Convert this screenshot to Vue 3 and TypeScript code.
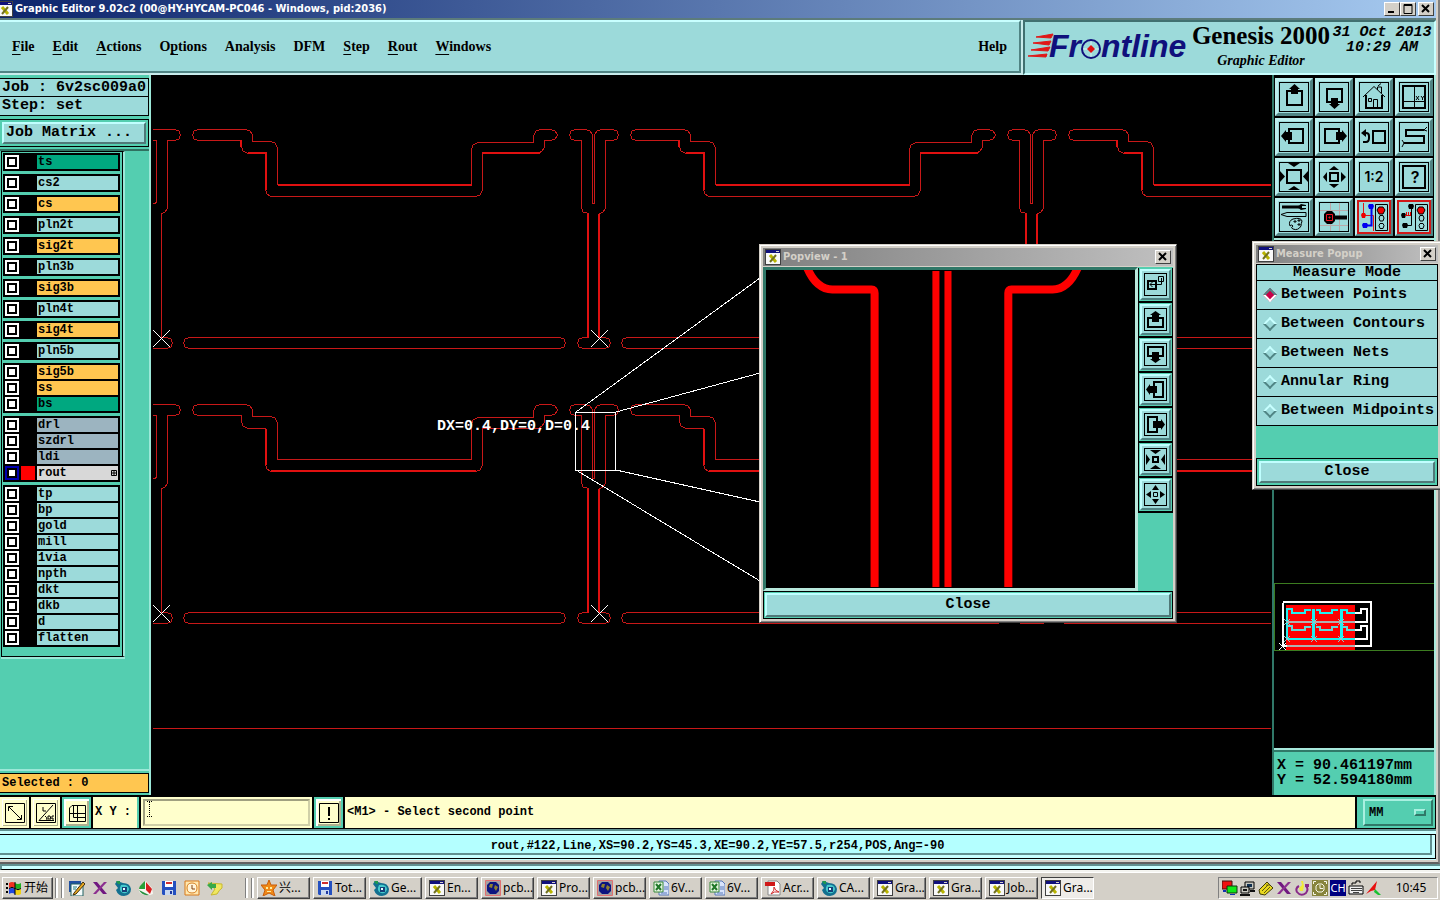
<script setup lang="ts">
import { h, ref } from 'vue'

interface Part {
  d?: string
  w?: number
  c?: string
  f?: string
  t?: string
  x?: number
  y?: number
  s?: number
}

const icons: Record<string, Part[]> = {
  panUp: [{ d: 'M8 9H23V23H8Z', w: 2 }, { d: 'M15.500 2L21 7H19V12H12V7H10Z', f: '#000' }],
  panDown: [{ d: 'M8 7H23V20H8Z', w: 2 }, { d: 'M12 16H19V22H21L15.500 27L10 22H12Z', f: '#000' }],
  home: [
    { d: 'M4 15L15 4.500L26 15M18.500 8V5H22.500V11M19 4l3-2.500', w: 1 },
    { d: 'M7 13V26H23V13', w: 2 },
    { d: 'M14.500 26V17.500H18.500V26M9.500 16.500h3v3h-3z', w: 1 },
  ],
  gridXy: [
    { d: 'M4 4H26V26H4Z', w: 2 },
    { d: 'M15.500 4V26M4 19.500H26', w: 1 },
    { d: 'M17 14l3 4M20 14l-3 4M22 14l1.500 2L25 14M23.500 16v2', w: 1 },
  ],
  panLeft: [{ d: 'M10 7H24V21H10Z', w: 2 }, { d: 'M2 14L7 8V10H13V18H7V20Z', f: '#000' }],
  panRight: [{ d: 'M6 7H20V21H6Z', w: 2 }, { d: 'M28 14L23 8V10H17V18H23V20Z', f: '#000' }],
  previous: [
    { d: 'M14 9H26V21H14Z', w: 2 },
    { d: 'M4 20H7Q10 20 10 16V14Q10 11 7 11H5', w: 2 },
    { d: 'M2 11L7 7V15Z', f: '#000' },
  ],
  snake: [
    { d: 'M25 8H7V14H25V21H5', w: 2 },
    { d: 'M25 8l3-3M25 8l3 1M5 21l-2-3M5 21l-2 4', w: 1 },
  ],
  fit: [
    { d: 'M8 8H22V21H8Z', w: 2 },
    { d: 'M9 1H21L15 5ZM9 28H21L15 24ZM1 9V20L6 14.500ZM29 9V20L24 14.500Z', f: '#000' },
  ],
  expand: [
    { d: 'M11 11H19V19H11Z', w: 2 },
    { d: 'M10 8H20L15 4ZM10 22H20L15 26ZM8 10V20L4 15ZM22 10V20L27 15Z', f: '#000' },
  ],
  ratio: [{ t: '1:2', x: 15, y: 20, s: 14 }],
  help: [{ d: 'M4 4H26V26H4Z', w: 2 }, { t: '?', x: 16, y: 21, s: 16 }],
  tools: [
    { d: 'M3 5H20', w: 3 },
    { d: 'M27 3L22 2L18 5L22 8L27 7V6H23V4H27Z', f: '#000' },
    { d: 'M2 12.500L8 10.500H27V14.500H8Z', w: 1 },
    { d: 'M11 24Q9 19 14 17Q22 15 23 19Q22 22 22 24Q19 29 14 27Q11 26 14 24Q13 22 11 24Z', w: 1 },
    { d: 'M15 19h2v1h-2zM19 18h2v1h-2zM19 22h2v1h-2z', w: 1 },
  ],
  probe: [
    { d: 'M11.500 1V29M20.500 1V29M1 8.500H29M1 23.500H29', w: 1, c: '#b9a9a9' },
    { d: 'M16 15.500H28', w: 4 },
    { d: 'M8 9H13L16 12V19L13 22H8L5 19V12Z', f: '#000' },
    { d: 'M7.500 12.500h6v6h-6zM10 15h1v1h-1z', w: 1, c: '#f01020' },
  ],
  netHighlight: [
    { d: 'M4.500 1V13.500M4 13.500H14.500V29', w: 1, c: '#e01818' },
    { d: 'M12.500 4V23.500H6', w: 2, c: '#0000f0' },
    { d: 'M10 2h4l1 2-1 3h-4l-1-3zM4 21h4l1 2-1 3H4l-1-3z', f: '#0000f0' },
    { d: 'M3 11h3l1 2-1 3H3l-1-3z', f: '#f00000' },
    { d: 'M16.500 2.500H28.500V28.500H16.500Z', w: 1 },
    { d: 'M20 5h4l2 3-2 4h-4l-2-4z', f: '#f00000', c: '#000', w: 1 },
    { d: 'M21 13.500h3l1 2.500-1 3h-3l-1-3zM21 21.500h3l1 2-1 3h-3l-1-3z', w: 1 },
  ],
  netBroken: [
    { d: 'M12.500 4V23.500H6', w: 1 },
    { d: 'M10 2h4l1 2-1 3h-4l-1-3zM4 21h4l1 2-1 3H4l-1-3zM3 11h3l1 2-1 3H3l-1-3z', f: '#000' },
    { d: 'M6 13.500H12M7.500 10V14M9.500 10V14M11.500 10V14', w: 1, c: '#e00000' },
    { d: 'M16.500 2.500H28.500V28.500H16.500Z', w: 1 },
    { d: 'M20 5h4l2 3-2 4h-4l-2-4z', f: '#f00000', c: '#000', w: 1 },
    { d: 'M21 13.500h3l1 2.500-1 3h-3l-1-3zM21 21.500h3l1 2-1 3h-3l-1-3z', w: 1 },
  ],
  popLink: [
    { d: 'M3 7H11V15H3Z', w: 2 },
    { d: 'M13.500 2.500H18.500V7.500H13.500ZM16.500 4V10.500H5M7.500 8L5 10.500L7.500 13', w: 1 },
  ],
  popUp: [{ d: 'M7 9H3V18H18V9H14', w: 2 }, { d: 'M10.500 2L16 6H14V13H7V6H5Z', f: '#000' }],
  popDown: [{ d: 'M7 12H3V3H18V12H14', w: 2 }, { d: 'M10.500 19L16 15H14V8H7V15H5Z', f: '#000' }],
  popLeft: [{ d: 'M9 7V3H18V18H9V14', w: 2 }, { d: 'M1 10.500L5 5V7H12V14H5V16Z', f: '#000' }],
  popRight: [{ d: 'M12 7V3H3V18H12V14', w: 2 }, { d: 'M20 10.500L16 5V7H8V14H16V16Z', f: '#000' }],
  popIn: [
    { d: 'M8 8H13V13H8Z', w: 2 },
    { d: 'M5 1H16L10.500 5ZM5 20H16L10.500 16ZM1 5V16L5 10.500ZM20 5V16L16 10.500Z', f: '#000' },
  ],
  popOut: [
    { d: 'M8.500 8.500H12.500V12.500H8.500Z', w: 1 },
    { d: 'M7 6H14L10.500 1ZM7 15H14L10.500 20ZM6 7V14L1 10.500ZM15 7V14L20 10.500Z', f: '#000' },
  ],
  diagonal: [{ d: 'M.500.500H19.500V19.500H.500Z', w: 1 }, { d: 'M4 4L16 16M3.500 8V3.500H8M16.500 12V16.500H12', w: 1 }],
  angle: [{ d: 'M.500.500H19.500V19.500H.500Z', w: 1 }, { d: 'M17 2L3 17.500H18M7 4V8H10M9 13Q11 14 11 17M14 13h-2v3h3zM18 13h-2v3h2', w: 1 }],
  snapGrid: [{ d: 'M5 2.500H18.500V18.500H2.500V5Z', w: 1 }, { d: 'M10.500 3V18M3 10.500H18M6.500 3V14.500H18', w: 1 }],
  alert: [{ d: 'M.500.500H19.500V19.500H.500Z', w: 1 }, { d: 'M10 4V13M10 15V17', w: 2 }],
  xwin: [
    { d: 'M0 0H16V16H0Z', f: '#404040' },
    { d: 'M1 1H15V15H1Z', f: '#f8f8f8' },
    { d: 'M1 1H15V4H1Z', f: '#10107c' },
    { d: 'M11 2h3v1h-3z', f: '#d4d0c8' },
    { d: 'M5 6L11 13', w: 3, c: '#b8b400' },
    { d: 'M11 6L5 13', w: 2, c: '#707020' },
  ],
  notepad: [
    { d: 'M0 1H12V12H0Z', f: '#2050a0' },
    { d: 'M2 4H14V16H2Z', f: '#f4fbfb', c: '#206060', w: 1 },
    { d: 'M5 13L14 2L16 4L7 14L4 15Z', f: '#e8a820', c: '#403010', w: 1 },
    { d: 'M4 7h4M4 9h3', w: 1, c: '#208080' },
  ],
  purpleX: [
    { d: 'M1 2H5L15 14H11Z', f: '#701880' },
    { d: 'M12 2H15L4 14H1Z', f: '#8c3090' },
  ],
  orb: [
    { d: 'M2 1L8 3Q15 3 16 9Q16 15 9 16Q3 16 1 10L3 8L0 4Z', f: '#127090' },
    { d: 'M6 5Q13 4 14 9Q13 14 8 13Q3 11 6 5Z', f: '#46c9cc' },
    { d: 'M7 7h5v5H7z', f: '#164078' },
    { d: 'M8 8h2v2H8z', f: '#e8ffff' },
    { d: 'M1 1H5V4H3Z', f: '#209850' },
  ],
  sail: [
    { d: 'M8 1L14 8L15 14Q8 17 2 13Q0 10 2 8Z', f: '#f6f6f0' },
    { d: 'M7 1Q1 6 1 9H7Z', f: '#28a038' },
    { d: 'M8 2L14 9L12 14L8 10Z', f: '#d82020' },
    { d: 'M1 10Q4 16 11 15L7 13Z', f: '#289040' },
  ],
  floppy: [
    { d: 'M1 1H15V15H2L1 14Z', f: '#2450c0' },
    { d: 'M4 1H12V7H4Z', f: '#fff' },
    { d: 'M5 2H11V4H5Z', f: '#d03030' },
    { d: 'M4 10H12V15H4Z', f: '#c8d8f0' },
    { d: 'M9 11h2v3H9z', f: '#2038a0' },
  ],
  clockBox: [
    { d: 'M1 1H15V15H1Z', f: '#ffe8b0', c: '#d87818', w: 1 },
    { d: 'M8 3Q13 3 13 8Q13 13 8 13Q3 13 3 8Q3 3 8 3Z', f: '#fff4d8', c: '#d88020', w: 1 },
    { d: 'M8 5V9H11', w: 1, c: '#804010' },
  ],
  note: [
    { d: 'M1 3L15 4L15 8Q12 10 10 14L4 15L8 9Z', f: '#f0e860', c: '#c8b830', w: 1 },
    { d: 'M0 5L5 2V4H9V8H5V10Z', f: '#38a848' },
  ],
  star: [
    { d: 'M8 0L10 5L16 5L12 10L14 16L8 13L2 16L4 10L0 5L6 5Z', f: '#f08a18', c: '#c85c08', w: 1 },
    { d: 'M5 7h2v2H5zM9 7h2v2H9zM6 11h4v1H6z', f: '#fff0a0' },
  ],
  globe: [
    { d: 'M.500.500H15.500V15.500H.500Z', f: '#a8a0a0', c: '#e07070', w: 1 },
    { d: 'M5 2H11L14 5V11L11 14H5L2 11V5Z', f: '#0c1480' },
    { d: 'M5 4H8L7 8L4 7ZM10 5L13 7L11 11L9 8Z', f: '#908030' },
  ],
  excel: [
    { d: 'M6 1H13L16 4V15H6Z', f: '#d8e4fc', c: '#5878b8', w: 1 },
    { d: 'M1 2H10V12H1Z', f: '#e6f6e0', c: '#388838', w: 1 },
    { d: 'M3 4L8 10M8 4L3 10', w: 2, c: '#207828' },
    { d: 'M11 7H15M11 9H15M8 13H14', w: 1, c: '#5878b8' },
  ],
  pdf: [
    { d: 'M3 1H12L15 4V15H3Z', f: '#fff', c: '#888', w: 1 },
    { d: 'M0 2H10V6H0Z', f: '#d01818' },
    { d: 'M6 14Q10 10 9 7Q10 11 14 12Q9 11 6 14Z', w: 1, c: '#d02828' },
  ],
  monitors: [
    { d: 'M0 1H10V9H0Z', f: '#f01010', c: '#401010', w: 1 },
    { d: 'M5 6H15V13H5Z', f: '#10e818', c: '#103010', w: 1 },
    { d: 'M8 14H13V15H8ZM1 10H4V12H1Z', f: '#1030b0' },
  ],
  network: [
    { d: 'M5 2H14V9H5Z', f: '#c8c8c0', c: '#000', w: 1 },
    { d: 'M7 4H12V7H7Z', f: '#103050' },
    { d: 'M1 7H9V13H1Z', f: '#c8c8c0', c: '#000', w: 1 },
    { d: 'M3 9H7V11H3ZM0 14H10V16H0ZM10 10H15V12H10Z', f: '#101010' },
  ],
  tag: [
    { d: 'M1 10L9 2L15 8L7 15L2 14Z', f: '#e8d820', c: '#403c08', w: 1 },
    { d: 'M4 11L10 5M6 13L12 7M8 5h4', w: 1, c: '#605810' },
  ],
  ring: [
    { d: 'M5 6Q1 8 3 12Q7 17 12 13Q15 9 12 6', w: 2, c: '#882888' },
    { d: 'M11 4h4v3h-4z', f: '#882888' },
    { d: 'M7 1H9L10 6L9 11H6L5 8L8 5Z', f: '#f0e838' },
  ],
  clockOlive: [
    { d: 'M0 0H16V16H0Z', f: '#88843c' },
    { d: 'M6 4H10L12 6V10L10 12H6L4 10V6Z', w: 1, c: '#f8f8e8' },
    { d: 'M8 5V8.500H11M1.500 4V1.500H4M12 1.500H14.500V4M1.500 12V14.500H4M12 14.500H14.500V12', w: 1, c: '#f8f8e8' },
  ],
  keyboard: [
    { d: 'M1 6H15V14H1Z', f: '#f0f0f0', c: '#000', w: 1 },
    { d: 'M3 8.500H14M3 10.500H14M5 12.500H11', w: 1, c: '#404040' },
    { d: 'M4 5V3H8V1H12V3', w: 1 },
  ],
  wing: [
    { d: 'M0 14L11 1L9 10L5 11Z', f: '#e81010' },
    { d: 'M9 9L15 15H12L8 12Z', f: '#18c030' },
  ],
  flag: [
    { d: 'M0 3h2v2H0zM0 7h2v2H0zM0 11h2v2H0z', f: '#000' },
    { d: 'M3 3Q6 1 9 3V8Q6 6 3 8Z', f: '#f03020' },
    { d: 'M9 3Q12 5 15 3V8Q12 10 9 8Z', f: '#20b020' },
    { d: 'M3 9Q6 7 9 9V14Q6 12 3 14Z', f: '#2048e0' },
    { d: 'M9 9Q12 11 15 9V14Q12 16 9 14Z', f: '#f0d010' },
    { d: 'M9 2V15M3 8.500Q6 6 9 8.500T15 8.500', w: 1 },
  ],
}

const Icon = (p: { name: string; size: number }) =>
  h(
    'svg',
    { width: p.size, height: p.size, viewBox: `0 0 ${p.size} ${p.size}`, 'aria-hidden': 'true' },
    icons[p.name].map((q) =>
      q.t
        ? h('text', { x: q.x, y: q.y, 'font-size': q.s, 'text-anchor': 'middle', 'font-weight': 600, 'font-family': 'Inter, "Noto Sans", sans-serif' }, q.t)
        : h('path', { d: q.d, fill: q.f ?? 'none', stroke: q.c ?? (q.w ? '#000' : 'none'), 'stroke-width': q.w ?? 0 }),
    ),
  )
Icon.props = ['name', 'size']

const menus = [
  ['', 'F', 'ile'], ['', 'E', 'dit'], ['', 'A', 'ctions'], ['O', 'p', 'tions'], ['Analysis', '', ''],
  ['DFM', '', ''], ['', 'S', 'tep'], ['', 'R', 'out'], ['', 'W', 'indows'],
]

interface Layer { name: string; kind: string }
const L = (kind: string, ...names: string[]): Layer[] => names.map((name) => ({ name, kind }))
const layerGroups: Layer[][] = [
  L('mask', 'ts'), L('plane', 'cs2'), L('signal', 'cs'), L('plane', 'pln2t'), L('signal', 'sig2t'),
  L('plane', 'pln3b'), L('signal', 'sig3b'), L('plane', 'pln4t'), L('signal', 'sig4t'), L('plane', 'pln5b'),
  [...L('signal', 'sig5b', 'ss'), ...L('mask', 'bs')],
  [...L('drill', 'drl', 'szdrl', 'ldi'), ...L('active', 'rout')],
  L('plane', 'tp', 'bp', 'gold', 'mill', '1via', 'npth', 'dkt', 'dkb', 'd', 'flatten'),
]

const tools = [
  'panUp', 'panDown', 'home', 'gridXy', 'panLeft', 'panRight', 'previous', 'snake',
  'fit', 'expand', 'ratio', 'help', 'tools', 'probe', 'netHighlight', 'netBroken',
]
const popTools = ['popLink', 'popUp', 'popDown', 'popLeft', 'popRight', 'popIn', 'popOut']

const modes = ['Between Points', 'Between Contours', 'Between Nets', 'Annular Ring', 'Between Midpoints']
const mode = ref(modes[0])
const xy = ref('')
const unit = ref('MM')

const slotPath =
  'M198 129.500H246L250 131L252.500 135V141.500H271L275 143L277.500 148V184.500H471.500V149L473 145L478 142.500H533.500V136L536 131L540 129.500H551L555 131L557.500 135L555 139L551 140.500H544.500V147L542 151L538 153.500H482.500V190L480 195L476 196.500H271L267 194L265.500 190V153.500H248L243 151L241.500 146V140.500H198L194 139L192.500 135L194 131Z'
const tabPath =
  'M575 129.500H585L590 131L592.500 135V203.500H594.500V135L597 131L602 129.500H613L617 131L618.500 135L617 139L613 140.500H605.500V208L603 212L599.500 213.500V337.500H605L609 339L610.500 343L609 347L605 348.500H583L579 347L577.500 343L579 339L583 337.500H588.500V213.500L583 212L581.500 208V140.500H575L571 139L569.500 135L571 131Z'
const edgeTabPath =
  'M580 129.500H613L617 131L618.500 135L617 139L613 140.500H605.500V208L603 212L599.500 213.500V337.500H605L609 339L610.500 343L609 347L605 348.500H580M580 140.500H594.500V202L593 203.500H580'
const barPath =
  'M189 337.500H560L564 339L565.500 343L564 347L560 348.500H189L185 347L183.500 343L185 339Z'
const cells = [0, 1].flatMap((row) => [-1, 0, 1, 2].map((col) => ({ row, key: `${row}:${col}`, edge: col < 0, x: col * 438, y: row * 275 })))
const thick = ['M278 185H472M482 153H540M248 153H266V190M241 140V147M588 214V338M599 214V338', 'M271 196H476M266 154V190M588 214V338M599 214V338']

const quick = ['notepad', 'purpleX', 'orb', 'sail', 'floppy', 'clockBox', 'note']
const tasks: [string, string][] = [
  ['star', '兴...'], ['floppy', 'Tot...'], ['orb', 'Ge...'], ['xwin', 'En...'], ['globe', 'pcb...'],
  ['xwin', 'Pro...'], ['globe', 'pcb...'], ['excel', '6V...'], ['excel', '6V...'], ['pdf', 'Acr...'],
  ['orb', 'CA...'], ['xwin', 'Gra...'], ['xwin', 'Gra...'], ['xwin', 'Job...'], ['xwin', 'Gra...'],
]
const tray = ['monitors', 'network', 'tag', 'purpleX', 'ring', 'clockOlive', 'CH', 'keyboard', 'wing']
</script>

<template>
  <div class="desktop">
    <div class="window">
      <header class="title">
        <Icon name="xwin" :size="16" class="ticon" />
        <h1>Graphic Editor 9.02c2 (00@HY-HYCAM-PC046 - Windows, pid:2036)</h1>
        <div class="winbtns">
          <button type="button" aria-label="Minimize"><svg width="12" height="10"><path d="M2 8H8" stroke="#000" stroke-width="2" /></svg></button>
          <button type="button" aria-label="Maximize"><svg width="12" height="10"><path d="M2 .5H10V9.500H2ZM2 1.500H10" fill="none" stroke="#000" /></svg></button>
          <button type="button" class="x" aria-label="Close window"><svg width="12" height="10"><path d="M2 1L9 8M9 1L2 8" stroke="#000" stroke-width="2" /></svg></button>
        </div>
      </header>

      <div class="head">
        <nav class="menubar">
          <button v-for="m in menus" :key="m.join('')" type="button">{{ m[0] }}<u v-if="m[1]">{{ m[1] }}</u>{{ m[2] }}</button>
          <button type="button" class="help">Help</button>
        </nav>
        <div class="brand">
          <svg class="logo" width="164" height="40" viewBox="0 0 164 40" role="img" aria-label="Frontline">
            <path d="M8 8L25 5L23 9ZM5 14L23 12L21 16ZM3 21L22 18L20 22ZM0 27L19 25L18 28Z" fill="#e01818" stroke="#e01818" />
            <g class="word">
              <text x="21" y="28">Fr</text>
              <text x="73" y="28">ntline</text>
            </g>
            <circle cx="63" cy="20" r="9" fill="#9cdada" />
            <path d="M63 10V30M53 20H73" stroke="#d8f4f4" />
            <circle cx="63" cy="20" r="9" fill="none" stroke="#10107c" stroke-width="2" />
            <path d="M63 16L67 20L63 24L59 20Z" fill="#e01010" />
          </svg>
          <div class="product">
            <strong>Genesis 2000</strong>
            <em>Graphic Editor</em>
          </div>
          <div class="date">31 Oct 2013<br />10:29 AM</div>
        </div>
      </div>

      <main class="work">
        <aside class="left">
          <div class="jobinfo">
            <div class="info">Job : 6v2sc009a0</div>
            <div class="info">Step: set</div>
            <div class="frame"><button type="button" class="bevel matrix">Job Matrix ...</button></div>
          </div>
          <div class="layerarea">
            <div class="layers">
              <div v-for="(g, i) in layerGroups" :key="i" class="group">
                <div v-for="l in g" :key="l.name" class="layer" :class="l.kind">
                  <input :id="'layer-' + l.name" type="checkbox" />
                  <span class="swatch"></span>
                  <label :for="'layer-' + l.name">{{ l.name }}
                    <svg v-if="l.kind === 'active'" width="6" height="6"><path d="M.5 .5H5.500V5.500H.5ZM3 0V6M0 3H6" fill="none" stroke="#000" /></svg>
                  </label>
                </div>
              </div>
            </div>
          </div>
          <div class="selected">Selected : 0</div>
        </aside>

        <section class="canvas" aria-label="Board">
          <svg width="100%" height="100%">
            <g transform="translate(-153 -75)">
              <g fill="none" stroke="#c81818" shape-rendering="crispEdges">
                <g v-for="c in cells" :key="c.key" :transform="`translate(${c.x} ${c.y})`">
                  <path :d="slotPath" /><path :d="c.edge ? edgeTabPath : tabPath" /><path :d="barPath" />
                  <path v-if="!c.edge" :d="thick[c.row]" stroke="#e01010" stroke-width="2" />
                </g>
                <path d="M153 728.500H3000" />
              </g>
              <g fill="none" stroke="#fff" shape-rendering="crispEdges">
                <path v-for="c in cells" :key="c.key" :d="`M${c.x + 591} ${c.y + 330}l17 17m0 -17l-17 17`" />
                <path d="M575.500 412.500H615.500V470.500H575.500ZM576 412L760 278M616 412L760 373M616 470L760 502M576 470L760 581" />
              </g>
              <text class="measure" x="437" y="430">DX=0.4,DY=0,D=0.4</text>
            </g>
          </svg>
        </section>

        <aside class="right">
          <div class="tools">
            <button v-for="t in tools" :key="t" type="button" :aria-label="t" :class="{ red: t.startsWith('net') }">
              <Icon :name="t" :size="30" />
            </button>
          </div>
          <svg class="overview" width="100%" height="100%">
            <g transform="translate(-1274 -240)" fill="none" shape-rendering="crispEdges">
              <path d="M1434 583.500H1274.500V650.500H1434" stroke="#3c7c20" />
              <rect x="1286" y="605" width="69" height="45" fill="#f00" />
              <g stroke="#fff" stroke-width="2">
                <path d="M1284 602H1371V646H1283V604Z" />
                <path d="M1355 613H1361V609H1367V622H1355M1355 630H1361V626H1367V639H1355" />
              </g>
              <path d="M1287 622H1355M1287 646H1355" stroke="#b0b0b0" stroke-width="2" />
              <path d="M1287 639V609H1292V613H1305V610H1311M1316 610H1320V613H1332V610H1338M1343 610H1347V613H1355M1287 639H1355" stroke="#20f0f0" stroke-width="2" />
              <path d="M1313 609V639M1341 609V639" stroke="#20f0f0" stroke-width="3" />
              <path d="M1287 626H1292V630H1305V627H1311M1316 627H1320V630H1332V627H1338M1343 627H1347V630H1355" stroke="#60d8d8" stroke-width="2" />
              <path d="M1284 619l6 6m0-6l-6 6M1311 619l6 6m0-6l-6 6M1338 619l6 6m0-6l-6 6M1284 636l6 6m0-6l-6 6M1311 636l6 6m0-6l-6 6M1338 636l6 6m0-6l-6 6" stroke="#90c8c8" />
              <path d="M1279 643l7 7m0-7l-7 7" stroke="#fff" />
            </g>
          </svg>
          <div class="coords">X = 90.461197mm<br />Y = 52.594180mm</div>
        </aside>
      </main>

      <form class="prompt" @submit.prevent>
        <button type="button" class="pbtn" aria-label="Diagonal"><Icon name="diagonal" :size="20" /></button>
        <button type="button" class="pbtn" aria-label="Angle"><Icon name="angle" :size="20" /></button>
        <button type="button" class="pbtn teal" aria-label="Snap"><Icon name="snapGrid" :size="20" /></button>
        <label class="xylabel" for="xy">X Y :</label>
        <div class="xybox">
          <input id="xy" v-model="xy" type="text" />
          <svg class="caret" width="5" height="16"><path d="M2.500 1V15M0 .5H5M0 15.500H5" stroke="#000" stroke-dasharray="1 1" /></svg>
        </div>
        <button type="button" class="pbtn teal" aria-label="Alert"><Icon name="alert" :size="20" /></button>
        <output class="message">&lt;M1&gt; - Select second point</output>
        <div class="unit">
          <select v-model="unit" aria-label="Unit"><option>MM</option><option>INCH</option></select>
          <span class="knob"></span>
        </div>
      </form>

      <footer class="status"><div>rout,#122,Line,XS=90.2,YS=45.3,XE=90.2,YE=57.5,r254,POS,Ang=-90</div></footer>
    </div>
    <div class="behind"><div></div></div>

    <div class="taskbar">
      <button type="button" class="task start"><Icon name="flag" :size="16" />开始</button>
      <i class="sep"></i>
      <div class="quick">
        <button v-for="q in quick" :key="q" type="button" :aria-label="q"><Icon :name="q" :size="16" /></button>
      </div>
      <i class="sep"></i>
      <div class="tasks">
        <button v-for="(t, i) in tasks" :key="i" type="button" class="task" :class="{ on: i === tasks.length - 1 }">
          <Icon :name="t[0]" :size="16" />{{ t[1] }}
        </button>
      </div>
      <div class="tray">
        <template v-for="t in tray" :key="t">
          <span v-if="t === 'CH'" class="ch">CH</span>
          <Icon v-else :name="t" :size="16" />
        </template>
        <time>10:45</time>
      </div>
    </div>

    <section class="popup popview">
      <header><Icon name="xwin" :size="16" /><h2>Popview - 1</h2>
        <button type="button" aria-label="Close popview"><svg width="12" height="10"><path d="M2 1L9 8M9 1L2 8" stroke="#000" stroke-width="2" /></svg></button>
      </header>
      <div class="popbody">
        <svg class="detail" width="100%" height="100%" viewBox="0 0 367 317" preserveAspectRatio="none">
          <g transform="translate(-767 -270)" fill="none" stroke="#f00" stroke-width="8">
            <path d="M808 268Q817 289 833 289.500H872Q875 289.500 875 293V586" />
            <path d="M936 271V586M948 271V586" stroke-width="7" />
            <path d="M1077 268Q1068 289 1052 289.500H1011Q1008 289.500 1008 293V586" />
          </g>
        </svg>
        <div class="poptools">
          <div v-for="t in popTools" :key="t" class="cell"><button type="button" :aria-label="t"><Icon :name="t" :size="21" class="outlined" /></button></div>
        </div>
      </div>
      <div class="frame"><button type="button" class="bevel">Close</button></div>
    </section>

    <section class="popup measurepop">
      <header><Icon name="xwin" :size="16" /><h2>Measure Popup</h2>
        <button type="button" aria-label="Close measure popup"><svg width="12" height="10"><path d="M2 1L9 8M9 1L2 8" stroke="#000" stroke-width="2" /></svg></button>
      </header>
      <fieldset>
        <legend>Measure Mode</legend>
        <label v-for="m in modes" :key="m"><span class="dia"><input v-model="mode" type="radio" name="mode" :value="m" /></span>{{ m }}</label>
      </fieldset>
      <div class="gap"></div>
      <div class="frame"><button type="button" class="bevel">Close</button></div>
    </section>
  </div>
</template>

<style>
body { margin: 0; overflow: hidden; }
</style>

<style scoped>
* { box-sizing: border-box; }
.desktop {
  --cyan: #9cdada;
  --teal: #54ceb0;
  --cream: #ffffcc;
  --grey: #d4d0c8;
  --mono: "Liberation Mono", monospace;
  --ui: "Noto Sans", "Noto Sans CJK SC", sans-serif;
  position: relative;
  display: flex;
  flex-direction: column;
  height: 100vh;
  min-height: 800px;
  overflow: hidden;
  background: var(--grey);
  font: 700 15px/18px var(--mono);
  color: #000;
}
button, input, select { font: inherit; color: inherit; padding: 0; margin: 0; border: 0; border-radius: 0; background: none; }
svg { display: block; flex: none; }
.window { flex: 1; min-height: 0; display: flex; flex-direction: column; border-right: 2px solid #808080; border-bottom: 2px solid #606060; padding: 0 2px 2px 0; background: var(--grey); }
.title { display: flex; align-items: center; height: 18px; background: linear-gradient(90deg, #0c246c, #a6caf0); color: #fff; overflow: hidden; }
.title .ticon { margin: 0 1px 0 -3px; }
h1, h2 { margin: 0; font: 700 11px/18px "DejaVu Sans Condensed", "Noto Sans", sans-serif; flex: 1; white-space: nowrap; }
.title h1 { padding-left: 1px; }
.winbtns { display: flex; padding-right: 2px; }
.winbtns button, .popup header button { width: 16px; height: 14px; display: grid; place-items: center; background: var(--grey); border: 1px solid; border-color: #fff #404040 #404040 #fff; }
.winbtns .x { margin-left: 2px; }
.head { display: flex; height: 57px; border-top: 2px solid #5c7c7c; background: #c8ecec; }
.menubar { flex: 1; display: flex; align-items: center; gap: 18px; padding: 0 12px; margin-bottom: 2px; background: var(--cyan); border: 2px solid; border-color: #c8ffff #508484 #508484 var(--cyan); border-left: 0; margin-right: 2px; }
.menubar button { font: 700 14px/18px "Liberation Serif", serif; }
.menubar u { text-underline-offset: 3px; text-decoration-thickness: 1px; }
.menubar .help { margin-left: auto; }
.brand { flex: 0 0 413px; display: flex; background: var(--cyan); border: 2px solid; border-color: #407070 #c8ffff #c8ffff #407070; }
.logo { margin: 7px 0 0 3px; }
.word { font: italic 700 32px "Liberation Sans", sans-serif; fill: #10107c; }
.product { flex: none; display: flex; flex-direction: column; align-items: center; width: 138px; white-space: nowrap; }
.product strong { font: 700 25px/28px "Liberation Serif", serif; }
.product em { font: italic 700 14px/22px "Liberation Serif", serif; }
.date { flex: 1; padding-top: 3px; text-align: center; font: italic 700 15px/15px var(--mono); white-space: nowrap; }
.work { flex: 1; min-height: 0; display: flex; background: #000; }

.left { flex: 0 0 151px; display: flex; flex-direction: column; background: var(--teal); border-right: 2px solid #9ce8d8; margin-bottom: 1px; }
.jobinfo { padding: 3px 0 2px; border-bottom: 2px solid #307060; }
.info { height: 19px; padding-left: 2px; line-height: 18px; background: var(--cyan); border: 1px solid #000; border-left: 0; white-space: nowrap; }
.info + .info { border-top: 0; }
.frame { border: 1px solid #000; padding: 2px; background: var(--teal); }
.bevel { display: block; width: 100%; height: 22px; line-height: 18px; background: var(--cyan); border: 2px solid; border-color: #c0ffff #507878 #507878 #c0ffff; }
.jobinfo .frame { margin-top: 3px; border-left: 0; }
.jobinfo .matrix { text-align: left; padding-left: 2px; }
.layerarea { flex: 1; min-height: 0; border-bottom: 2px solid #9ce8d8; }
.layers { width: 124px; height: 506px; padding: 1px; border: 1px solid #000; border-right: 2px solid #9ce8d8; box-shadow: inset -1px 0 #000, 0 2px #9ce8d8; display: flex; flex-direction: column; gap: 3px; margin-left: 1px; }
.group { width: 117px; padding: 2px; background: #000; display: grid; gap: 2px; }
.layer { display: grid; grid-template-columns: 14px 14px 1fr; gap: 2px; height: 14px; }
.layer input { appearance: none; width: 14px; height: 14px; background: #fff; border: 2px solid #fff; box-shadow: inset 0 0 0 2px #000; }
.layer label { display: flex; align-items: center; justify-content: space-between; padding: 0 1px; font-size: 12px; line-height: 14px; background: var(--cyan); }
.mask label { background: #00a880; }
.signal label { background: #ffc650; }
.drill label { background: #9cb4c0; }
.active label { background: #d8d8d8; }
.active input { border-color: #0000b0; }
.active .swatch { background: #f00; }
.selected { height: 20px; margin: 2px 0; padding-left: 2px; line-height: 18px; font-size: 12px; background: #ffc650; border: 1px solid #000; border-left: 0; }

.canvas { flex: 1; min-width: 0; padding: 0 1px 0 2px; overflow: hidden; }
.measure { font: 700 15px "Liberation Mono", monospace; fill: #fff; }

.right { flex: 0 0 164px; display: flex; flex-direction: column; border-left: 2px solid #307868; border-right: 2px solid #a8e8dc; margin-bottom: 1px; }
.tools { display: grid; grid-template-columns: repeat(4, 38px); gap: 2px; padding: 3px 1px 2px; border-bottom: 2px solid #a8e8dc; }
.tools button { height: 38px; padding: 1px; background: var(--cyan); border: 3px solid; border-color: #bceeee #508484 #508484 #bceeee; }
.tools svg { outline: 1px solid #000; outline-offset: -1px; }
.tools .red svg { outline: 2px solid #d01818; outline-offset: 0; }
.overview { flex: 1; min-height: 0; }
.coords { height: 45px; padding: 6px 3px 0; font-size: 15px; line-height: 15px; background: var(--teal); border-top: 2px solid #307868; white-space: nowrap; box-shadow: 0 -2px #a8e8dc; }

.prompt { display: flex; flex: 0 0 33px; gap: 2px; padding: 1px 1px 1px 0; background: #000; font-size: 12px; }
.pbtn { flex: 0 0 29px; display: grid; place-items: center; background: var(--cream); border: 2px solid var(--cream); box-shadow: inset 1px 1px #fff, inset -1px -1px #b0b090; }
.pbtn.teal { border-color: var(--teal); box-shadow: inset 2px 2px #fff, inset -2px -2px #b0b090; }
.xylabel { width: 46px; padding-left: 2px; line-height: 30px; background: var(--cream); border-right: 2px solid var(--teal); }
.xybox { position: relative; width: 171px; padding: 2px; background: var(--cream); }
.xybox input { width: 100%; height: 100%; padding-left: 12px; border: 2px solid; border-color: #a0a080 #d0d0a8 #d0d0a8 #a0a080; }
.caret { position: absolute; left: 6px; top: 4px; }
.message { flex: 1; padding-left: 2px; line-height: 30px; background: var(--cream); }
.unit { position: relative; width: 78px; padding: 2px 2px 2px 6px; background: var(--teal); }
.unit select { appearance: none; width: 100%; height: 100%; padding-left: 4px; border: 2px solid; border-color: #a8f0e0 #307868 #307868 #a8f0e0; }
.knob { position: absolute; right: 9px; top: 12px; width: 12px; height: 7px; border: 2px solid; border-color: #a8f0e0 #307868 #307868 #a8f0e0; pointer-events: none; }
.status { flex: 0 0 31px; padding: 3px 0 1px; background: #c8ffff; border-top: 2px solid #609090; font-size: 12px; }
.status div { height: 25px; line-height: 22px; text-align: center; background: #b4ffff; border: 1px solid #000; border-width: 1px 1px 1px 0; box-shadow: inset -3px -3px #c8ffff, inset -5px -5px #609090; }
.behind { flex: 0 0 8px; background: #f4f4f0; }
.behind div { height: 6px; border: solid #609090; border-width: 2px 0 0 2px; border-bottom: 1px solid #000; background: #c8ffff; }

.taskbar { flex: 0 0 28px; display: flex; align-items: center; padding: 2px 2px 0; background: var(--grey); border-top: 1px solid #fff; font: 400 12px/18px var(--ui); }
.task { display: flex; align-items: center; flex: 0 0 53px; gap: 2px; height: 22px; padding: 0 3px; white-space: nowrap; overflow: hidden; background: var(--grey); border: 1px solid; border-color: #fff #404040 #404040 #fff; box-shadow: inset -1px -1px #808080; }
.task.on { background: #eeece8; border-color: #404040 #fff #fff #404040; box-shadow: none; }
.start { flex-basis: 51px; }
.sep { width: 8px; height: 20px; margin: 0 3px; border: solid #fff; border-width: 0 2px; box-shadow: -1px 0 #808080, inset -1px 0 #808080; }
.quick { display: flex; gap: 7px; width: 176px; padding-left: 2px; }
.tasks { flex: 1; min-width: 0; overflow: hidden; display: flex; gap: 3px; }
.tray { flex: 0 0 220px; display: flex; align-items: center; gap: 2px; height: 22px; padding: 0 3px; border: 1px solid; border-color: #808080 #fff #fff #808080; }
.ch { width: 16px; height: 16px; line-height: 16px; text-align: center; font-size: 11px; background: #000080; color: #fff; }
.tray time { flex: 1; padding-left: 4px; text-align: center; }

.popup { position: absolute; display: flex; flex-direction: column; background: var(--grey); border: 1px solid; border-color: #d4d0c8 #404040 #404040 #d4d0c8; box-shadow: inset 1px 1px #fff, inset -1px -1px #808080; padding: 3px; }
.popup header { display: flex; align-items: center; gap: 2px; height: 18px; padding-right: 2px; color: var(--grey); background: linear-gradient(90deg, #808080, #c0c0c0); }
.popup header svg { margin-left: 2px; }
.popup header button svg { margin: 0; }
.popview { left: 759px; top: 244px; width: 418px; }
.popbody { display: flex; height: 324px; margin-top: 1px; background: var(--teal); }
.detail { flex: 1 1 0; min-width: 0; height: 324px; background: #000; border: 3px solid; border-color: #307868 #b8e8dc #b8e8dc #307868; }
.poptools { flex: 0 0 35px; padding-top: 1px; }
.cell { height: 35px; padding: 1px; border: 1px solid #000; border-width: 0 1px 2px 1px; }
.cell button { width: 31px; height: 31px; padding: 3px; background: var(--cyan); border: 2px solid; border-color: #c0ffff #508484 #508484 #c0ffff; }
.outlined { outline: 1px solid #000; }
.popview .frame { padding: 1px; }
.popview .bevel { height: 24px; }
.measurepop { right: -2px; top: 241px; width: 190px; }
fieldset { margin: 1px 0 0; padding: 0; border: 0; background: #000; min-width: 0; }
legend { display: block; width: 100%; height: 17px; padding: 0; line-height: 16px; text-align: center; background: var(--cyan); border: 1px solid #000; }
fieldset label { display: flex; align-items: center; gap: 4px; height: 28px; margin: 0 1px 1px; padding: 0 0 0 4px; background: var(--cyan); border: 1px solid var(--cyan); white-space: nowrap; }
.dia { flex: none; display: grid; place-items: center; width: 15px; height: 15px; }
.dia input { appearance: none; width: 10px; height: 10px; transform: rotate(45deg); border: 2px solid; border-color: #c8ffff #508484 #508484 #c8ffff; }
.dia input:checked { background: #c80048; border-color: #508484 #fff #fff #508484; }
.gap { height: 32px; background: var(--teal); }
</style>
